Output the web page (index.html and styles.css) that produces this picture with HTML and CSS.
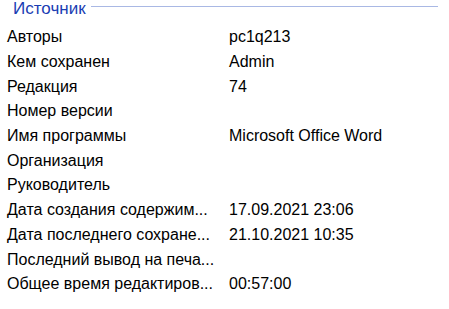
FILE: index.html
```html
<!DOCTYPE html>
<html>
<head>
    <title>Свойства</title>
    <link rel="stylesheet" href="styles.css">
</head>
<body>
    <div class="group">
        <div class="group-head">
            <span class="group-title">Источник</span>
            <span class="group-line"></span>
        </div>
        <div class="props">
            <div class="prop"><span class="name">Авторы</span><span class="value">pc1q213</span></div>
            <div class="prop"><span class="name">Кем сохранен</span><span class="value">Admin</span></div>
            <div class="prop"><span class="name">Редакция</span><span class="value">74</span></div>
            <div class="prop"><span class="name">Номер версии</span><span class="value"></span></div>
            <div class="prop"><span class="name">Имя программы</span><span class="value">Microsoft Office Word</span></div>
            <div class="prop"><span class="name">Организация</span><span class="value"></span></div>
            <div class="prop"><span class="name">Руководитель</span><span class="value"></span></div>
            <div class="prop"><span class="name">Дата создания содержим...</span><span class="value">17.09.2021 23:06</span></div>
            <div class="prop"><span class="name">Дата последнего сохране...</span><span class="value">21.10.2021 10:35</span></div>
            <div class="prop"><span class="name">Последний вывод на печа...</span><span class="value"></span></div>
            <div class="prop"><span class="name">Общее время редактиров...</span><span class="value">00:57:00</span></div>
        </div>
    </div>
</body>
</html>
```

FILE: styles.css
```css
body {
    margin: 0;
    background: #ffffff;
    font-family: "Liberation Sans", Arial, sans-serif;
    color: #000000;
}

.group {
    width: 438px;
}

/* group box caption with the rule running to the right */
.group-head {
    display: flex;
    align-items: flex-start;
    height: 18px;
    padding-left: 13px;
}

.group-title {
    color: #1a3db3;
    font-size: 17px;
    line-height: 17px;
}

.group-line {
    flex: 1;
    border-top: 1px solid #a9b8e4;
    margin-left: 5px;
    margin-top: 6px;
}

.props {
    padding-top: 7px;
    padding-left: 7px;
}

.prop {
    display: grid;
    grid-template-columns: 222px auto;
    height: 24.7px;
    align-items: center;
    font-size: 16px;
}

.name {
    white-space: nowrap;
}
```
